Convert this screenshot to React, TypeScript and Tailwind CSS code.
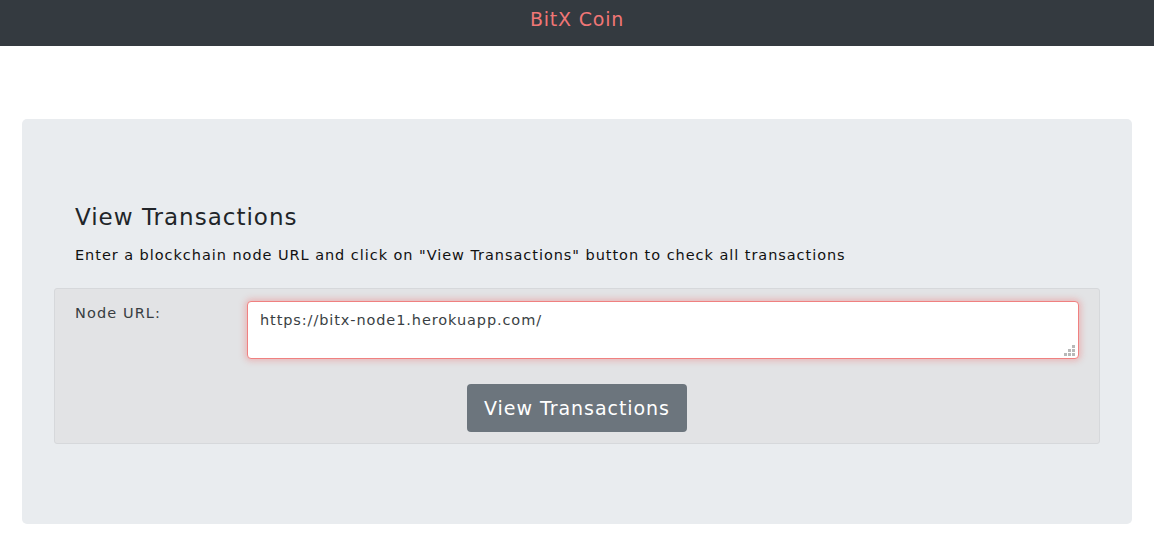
import { useState } from "react";

export default function App() {
  const [url, setUrl] = useState("https://bitx-node1.herokuapp.com/");

  return (
    <div className="min-h-screen bg-white text-[#212529] font-['DejaVu_Sans',Verdana,sans-serif]">
      <nav className="h-[46px] bg-[#343a40] flex items-center justify-center pb-[8px]">
        <span className="text-[19px] text-[#f07676] tracking-[0.8px]">BitX Coin</span>
      </nav>

      <main className="px-[22px] pt-[73px]">
        <section className="bg-[#e9ecef] rounded-[5px] px-8 pt-[82px] pb-[80px]">
          <div className="px-[21px]">
            <h1 className="text-[23px] leading-[32px] font-normal tracking-[1px]">View Transactions</h1>
            <p className="mt-[10px] mb-[21px] text-[14.5px] leading-[24px] text-[#111] tracking-[0.95px]">
              Enter a blockchain node URL and click on "View Transactions" button to check all transactions
            </p>
          </div>

          <div className="bg-[#e2e3e5] border border-[#d6d8db] rounded-[3px] px-5 pt-3 pb-[11px]">
            <div className="flex">
              <label className="w-[172px] shrink-0 text-[14.5px] leading-[24px] text-[#383d41] tracking-[1.1px]">
                Node URL:
              </label>
              <div className="relative flex-1">
                <textarea
                  value={url}
                  onChange={(e) => setUrl(e.target.value)}
                  className="block w-full h-[58px] bg-white border border-[#f08080] rounded-[4px] px-3 pt-[6px] text-[14.5px] leading-[24px] text-[#3a3f44] tracking-[0.9px] outline-none shadow-[0_0_6px_2px_rgba(240,128,128,0.45)] resize-none"
                />
                <div className="absolute right-[4px] bottom-[3px] grid grid-cols-3 gap-[1px] pointer-events-none">
                  <span className="w-[3px] h-[3px]" />
                  <span className="w-[3px] h-[3px]" />
                  <span className="w-[3px] h-[3px] bg-[#b8b8b8]" />
                  <span className="w-[3px] h-[3px]" />
                  <span className="w-[3px] h-[3px] bg-[#b8b8b8]" />
                  <span className="w-[3px] h-[3px] bg-[#b8b8b8]" />
                  <span className="w-[3px] h-[3px] bg-[#b8b8b8]" />
                  <span className="w-[3px] h-[3px] bg-[#b8b8b8]" />
                  <span className="w-[3px] h-[3px] bg-[#b8b8b8]" />
                </div>
              </div>
            </div>
            <div className="flex justify-center mt-[25px]">
              <button className="w-[220px] h-[48px] bg-[#6c757d] text-white rounded-[4px] text-[19px] tracking-[0.95px]">
                View Transactions
              </button>
            </div>
          </div>
        </section>
      </main>
    </div>
  );
}
